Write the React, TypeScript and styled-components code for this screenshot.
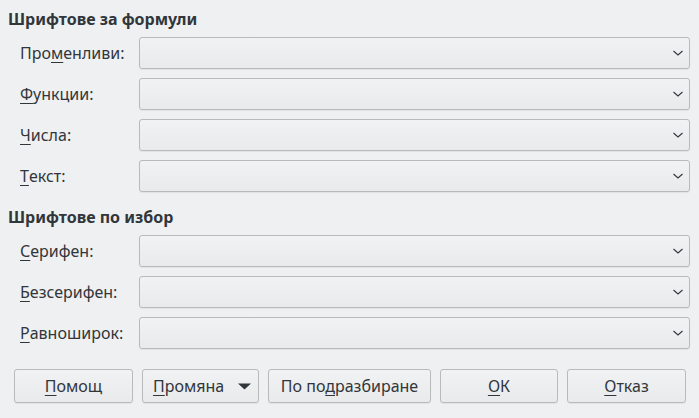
import styled, { createGlobalStyle } from "styled-components";

const GlobalStyle = createGlobalStyle`
  html, body {
    margin: 0;
    padding: 0;
    background: #eff0f1;
  }
  body {
    font-family: "Noto Sans", "DejaVu Sans", sans-serif;
    color: #31363b;
  }
`;

const Dialog = styled.div`
  width: 699px;
  height: 418px;
  box-sizing: border-box;
  padding: 9px 9px 0 8px;
  background: #eff0f1;
`;

const Heading = styled.div<{ $top?: number }>`
  font-size: 16px;
  font-weight: 700;
  line-height: 20px;
  margin-top: ${(p) => p.$top ?? 0}px;
  margin-bottom: 8px;
`;

const FieldGrid = styled.div`
  display: grid;
  grid-template-columns: 119px 1fr;
  row-gap: 9px;
  padding-left: 12px;
`;

const Label = styled.label`
  display: flex;
  align-items: center;
  font-size: 16px;
  height: 32px;
`;

const Key = styled.span`
  text-decoration: underline;
  text-underline-offset: 3px;
  text-decoration-thickness: 1px;
`;

const Combo = styled.div`
  height: 32px;
  box-sizing: border-box;
  border: 1px solid #b8babc;
  border-radius: 3px;
  background: linear-gradient(#f1f2f3, #e9eaeb);
  box-shadow: 0 1px 1px rgba(0, 0, 0, 0.06);
  display: flex;
  align-items: center;
  justify-content: flex-end;
  padding-right: 5px;
`;

const ButtonRow = styled.div`
  display: flex;
  gap: 9px;
  margin-top: 20px;
  padding-left: 6px;
`;

const Button = styled.button<{ $w: number; $left?: boolean }>`
  width: ${(p) => p.$w}px;
  height: 34px;
  box-sizing: border-box;
  border: 1px solid #b8babc;
  border-radius: 3px;
  background: linear-gradient(#f1f2f3, #e9eaeb);
  box-shadow: 0 1px 1px rgba(0, 0, 0, 0.06);
  font-family: "Noto Sans", "DejaVu Sans", sans-serif;
  font-size: 16px;
  color: #31363b;
  display: flex;
  align-items: center;
  justify-content: ${(p) => (p.$left ? "space-between" : "center")};
  padding: ${(p) => (p.$left ? "0 7px 0 10px" : "0")};
`;

const Chevron = () => (
  <svg width="12" height="8" viewBox="0 0 12 8">
    <path d="M1.5 2 L6 6 L10.5 2" fill="none" stroke="#31363b" strokeWidth="1.1" />
  </svg>
);

const Caret = () => (
  <svg width="13" height="7" viewBox="0 0 13 7">
    <path d="M0 0.5 H13 L6.5 6.5 Z" fill="#31363b" />
  </svg>
);

const formulaFields = [
  { pre: "Про", key: "м", post: "енливи:" },
  { pre: "", key: "Ф", post: "ункции:" },
  { pre: "", key: "Ч", post: "исла:" },
  { pre: "", key: "Т", post: "екст:" },
];

const customFields = [
  { pre: "", key: "С", post: "ерифен:" },
  { pre: "", key: "Б", post: "езсерифен:" },
  { pre: "", key: "Р", post: "авноширок:" },
];

const Fields = ({ items }) => (
  <FieldGrid>
    {items.map((f, i) => (
      <>
        <Label key={"l" + i}>
          {f.pre}
          <Key>{f.key}</Key>
          {f.post}
        </Label>
        <Combo key={"c" + i}>
          <Chevron />
        </Combo>
      </>
    ))}
  </FieldGrid>
);

export default function App() {
  return (
    <Dialog>
      <GlobalStyle />
      <Heading>Шрифтове за формули</Heading>
      <Fields items={formulaFields} />
      <Heading $top={15}>Шрифтове по избор</Heading>
      <Fields items={customFields} />
      <ButtonRow>
        <Button $w={119}>
          <span>
            <Key>П</Key>омощ
          </span>
        </Button>
        <Button $w={117} $left>
          <span>
            <Key>П</Key>ромяна
          </span>
          <Caret />
        </Button>
        <Button $w={163}>
          <span>
            По по<Key>д</Key>разбиране
          </span>
        </Button>
        <Button $w={118}>
          <span>
            <Key>О</Key>К
          </span>
        </Button>
        <Button $w={119}>
          <span>
            <Key>О</Key>тказ
          </span>
        </Button>
      </ButtonRow>
    </Dialog>
  );
}
